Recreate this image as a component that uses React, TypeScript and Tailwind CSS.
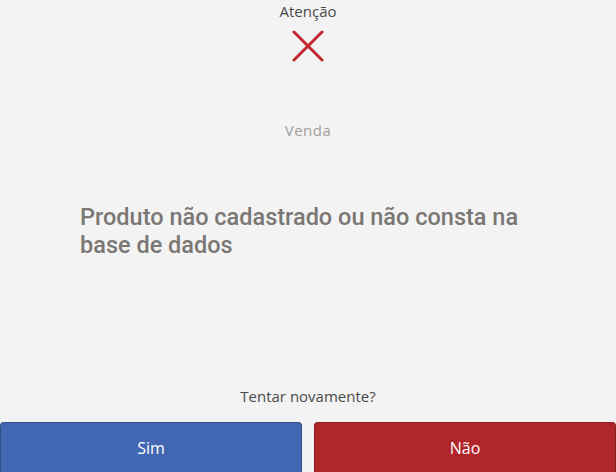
export default function App() {
  return (
    <main
      className="flex h-[472px] flex-col bg-[#f3f3f3]"
      style={{ fontFamily: '"Open Sans", "Noto Sans", sans-serif' }}
    >
      {/* Header */}
      <p className="mt-[1px] text-center text-[15px] leading-5 text-[#4a4a4a]">Atenção</p>
      <svg className="mx-auto mt-[9px] h-8 w-8" viewBox="0 0 32 32" fill="none">
        <path d="M2 2L30 30M30 2L2 30" stroke="#c0282d" strokeWidth="3" strokeLinecap="round" />
      </svg>
      <p className="mt-[58px] text-center text-[15px] leading-5 tracking-[0.5px] text-[#a0a0a0]">Venda</p>

      {/* Message */}
      <div className="mt-[63px] px-20">
        <p
          className="text-[23.5px] font-medium leading-[28px] text-[#7a7774]"
          style={{ fontFamily: '"Roboto", "Liberation Sans", sans-serif' }}
        >
          Produto não cadastrado ou não consta na base de dados
        </p>
      </div>

      <div className="flex-1" />

      {/* Footer */}
      <p className="mb-4 text-center text-[15px] leading-5 text-[#4a4a4a]">Tentar novamente?</p>
      <div className="grid h-[50px] grid-cols-2 gap-3">
        <button className="rounded-t-[4px] border border-b-0 border-black/25 bg-[#4267b2] text-[16px] text-white">
          Sim
        </button>
        <button className="rounded-t-[4px] border border-b-0 border-black/25 bg-[#b1262b] text-[16px] text-white">
          Não
        </button>
      </div>
    </main>
  );
}
